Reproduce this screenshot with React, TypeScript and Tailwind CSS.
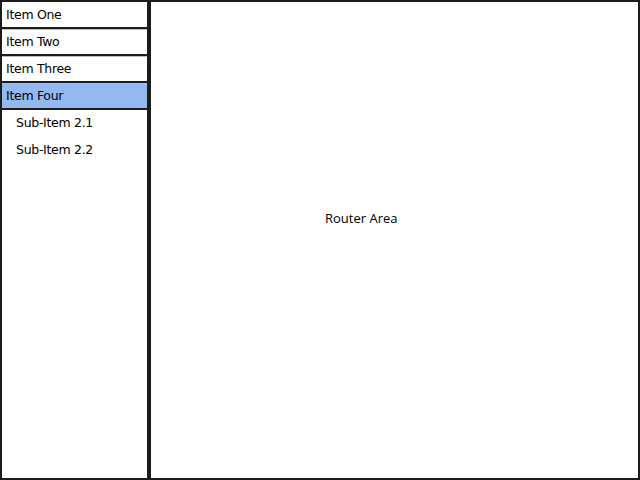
const items = ["Item One", "Item Two", "Item Three", "Item Four"];
const subItems = ["Sub-Item 2.1", "Sub-Item 2.2"];

export default function App() {
  const active = "Item Four";

  return (
    <div className="flex h-[480px] w-[640px] bg-white text-[13px] text-black" style={{ fontFamily: "'DejaVu Sans', sans-serif" }}>
      <aside className="flex h-full w-[149px] flex-col">
        {items.map((item, i) => (
          <div
            key={item}
            className={`flex h-[27px] items-center border-x-2 border-t-2 border-[#1c1c1c] px-[4px] ${
              i === 0 ? "" : "shadow-[inset_0_1px_0_#bdbdbd]"
            } ${item === active ? "bg-[#93b9f0]" : "bg-white"}`}
          >
            <span className="pt-[1px] text-[12.5px] tracking-[-0.3px]">{item}</span>
          </div>
        ))}
        <div className="flex flex-1 flex-col border-2 border-[#1c1c1c]">
          {subItems.map((s) => (
            <div key={s} className="flex h-[27px] items-center pl-[14px]">
              <span className="text-[12.5px] tracking-[-0.3px]">{s}</span>
            </div>
          ))}
        </div>
      </aside>
      <main className="flex flex-1 border-2 border-[#1c1c1c] pl-[174px] pt-[207px]">
        <span className="text-[13px]" style={{ fontFamily: "'Open Sans', sans-serif" }}>
          Router Area
        </span>
      </main>
    </div>
  );
}
